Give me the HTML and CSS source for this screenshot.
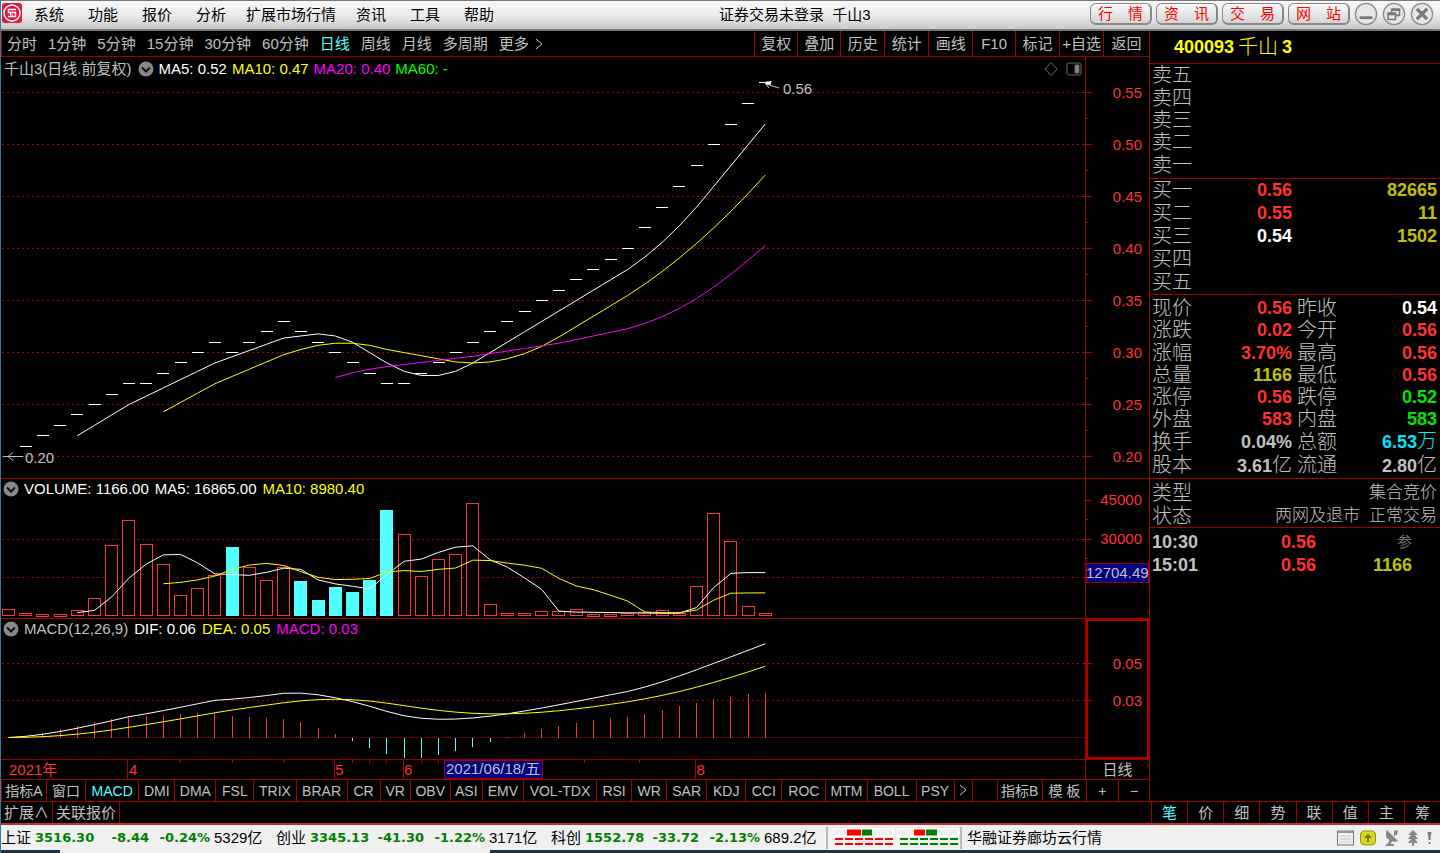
FILE: index.html
```html
<!DOCTYPE html>
<html lang="zh-CN">
<head>
<meta charset="utf-8">
<title>证券交易未登录 千山3</title>
<link rel="stylesheet" href="styles.css">
</head>
<body>
<div class="app">
  <header class="titlebar">
    <nav class="menu" aria-label="主菜单">
      <svg class="logo" viewBox="0 0 20 20" aria-hidden="true"><rect width="20" height="20" rx="3" fill="#e3173c"/><circle cx="10" cy="10" r="8" fill="none" stroke="#fff" stroke-width="1.5"/><path d="M14 6.500H6.500V9.500H13.500V13.500H6" fill="none" stroke="#fff" stroke-width="1.400"/><path d="M8.500 9.500V12H11" fill="none" stroke="#fff"/></svg>
      <button>系统</button><button>功能</button><button>报价</button><button>分析</button><button class="wide">扩展市场行情</button><button>资讯</button><button>工具</button><button>帮助</button>
    </nav>
    <div class="titlebar-right">
      <h1 class="window-title">证券交易未登录&nbsp; 千山3</h1>
      <div class="window-actions">
        <button class="pill">行　情</button><button class="pill">资　讯</button><button class="pill">交　易</button><button class="pill">网　站</button>
        <button class="round" aria-label="最小化"><svg viewBox="0 0 26 26"><circle cx="13" cy="13" r="11.500"/><path d="M6 17h14" stroke-width="3"/></svg></button>
        <button class="round" aria-label="还原"><svg viewBox="0 0 26 26"><circle cx="13" cy="13" r="11.500"/><path d="M6.500 12h8v7h-8zM6.500 13.500h8M10.500 12V7.500h8.500v7h-4.500M10.500 9h8.500" stroke-width="1.700"/></svg></button>
        <button class="round" aria-label="关闭"><svg viewBox="0 0 26 26"><circle cx="13" cy="13" r="11.500"/><path d="M7.500 7.500l11 11M18.500 7.500l-11 11" stroke-width="3.500"/></svg></button>
      </div>
    </div>
  </header>

  <div class="workspace">
    <main class="charts">
      <div class="toolbar">
        <div class="periods">
          <button>分时</button><button>1分钟</button><button>5分钟</button><button>15分钟</button><button>30分钟</button><button>60分钟</button><button class="active">日线</button><button>周线</button><button>月线</button><button>多周期</button><button class="more">更多<svg class="chevron" viewBox="0 0 8 12" aria-hidden="true"><path d="M1 1l6 5-6 5"/></svg></button>
        </div>
        <div class="tools">
          <button>复权</button><button>叠加</button><button>历史</button><button>统计</button><button>画线</button><button>F10</button><button>标记</button><button>+自选</button><button>返回</button>
        </div>
      </div>

      <section class="panel price">
        <div class="plot">
          <div class="legend">
            <span>千山3(日线.前复权)</span>
            <svg class="toggle" viewBox="0 0 16 16"><circle cx="8" cy="8" r="7.500"/><path d="M4 6.500l4 4 4-4"/></svg>
            <span class="white">MA5: 0.52</span><span class="yellow">MA10: 0.47</span><span class="magenta">MA20: 0.40</span><span class="green">MA60: -</span>
            <svg class="legend-icons" viewBox="0 0 42 16"><path d="M8 1.500l6 6.500-6 6.500L2 8z"/><rect x="24" y="2" width="14" height="12" rx="2"/><path d="M32 4h4v8h-4z" fill="#888"/></svg>
          </div>
          <svg class="canvas" id="price-plot" role="img" aria-label="日线"></svg>
        </div>
        <svg class="axis" id="price-axis"></svg>
      </section>

      <section class="panel volume">
        <div class="plot">
          <div class="legend">
            <svg class="toggle" viewBox="0 0 16 16"><circle cx="8" cy="8" r="7.500"/><path d="M4 6.500l4 4 4-4"/></svg>
            <span class="white">VOLUME: 1166.00</span><span class="white">MA5: 16865.00</span><span class="yellow">MA10: 8980.40</span>
          </div>
          <svg class="canvas" id="volume-plot" role="img" aria-label="VOLUME"></svg>
        </div>
        <svg class="axis" id="volume-axis"></svg>
      </section>

      <section class="panel macd">
        <div class="plot">
          <div class="legend">
            <svg class="toggle" viewBox="0 0 16 16"><circle cx="8" cy="8" r="7.500"/><path d="M4 6.500l4 4 4-4"/></svg>
            <span>MACD(12,26,9)</span><span class="white">DIF: 0.06</span><span class="yellow">DEA: 0.05</span><span class="magenta">MACD: 0.03</span>
          </div>
          <svg class="canvas" id="macd-plot" role="img" aria-label="MACD"></svg>
        </div>
        <svg class="axis boxed" id="macd-axis"></svg>
      </section>

      <div class="timeline">
        <svg class="dates" id="dates"></svg>
        <div class="timeline-period">日线</div>
      </div>

      <div class="indicators">
        <button>指标A</button><button>窗口</button><button class="active">MACD</button><button>DMI</button><button>DMA</button><button>FSL</button><button>TRIX</button><button>BRAR</button><button>CR</button><button>VR</button><button>OBV</button><button>ASI</button><button>EMV</button><button>VOL-TDX</button><button>RSI</button><button>WR</button><button>SAR</button><button>KDJ</button><button>CCI</button><button>ROC</button><button>MTM</button><button>BOLL</button><button>PSY</button><button aria-label="更多指标"><svg class="chevron" viewBox="0 0 8 12"><path d="M1 1l6 5-6 5"/></svg></button><span></span><button>指标B</button><button>模 板</button><button>+</button><button>−</button>
      </div>
    </main>

    <aside class="quote">
      <h2 class="stock"><b>400093</b><span>千山</span><b>3</b></h2>
      <table class="book sell">
        <tr><th>卖五</th><td></td><td></td></tr>
        <tr><th>卖四</th><td></td><td></td></tr>
        <tr><th>卖三</th><td></td><td></td></tr>
        <tr><th>卖二</th><td></td><td></td></tr>
        <tr><th>卖一</th><td></td><td></td></tr>
      </table>
      <table class="book buy">
        <tr><th>买一</th><td class="red">0.56</td><td class="gold">82665</td></tr>
        <tr><th>买二</th><td class="red">0.55</td><td class="gold">11</td></tr>
        <tr><th>买三</th><td class="white">0.54</td><td class="gold">1502</td></tr>
        <tr><th>买四</th><td></td><td></td></tr>
        <tr><th>买五</th><td></td><td></td></tr>
      </table>
      <table class="stats">
        <tr><th>现价</th><td class="red">0.56</td><th>昨收</th><td class="white">0.54</td></tr>
        <tr><th>涨跌</th><td class="red">0.02</td><th>今开</th><td class="red">0.56</td></tr>
        <tr><th>涨幅</th><td class="red">3.70%</td><th>最高</th><td class="red">0.56</td></tr>
        <tr><th>总量</th><td class="gold">1166</td><th>最低</th><td class="red">0.56</td></tr>
        <tr><th>涨停</th><td class="red">0.56</td><th>跌停</th><td class="lime">0.52</td></tr>
        <tr><th>外盘</th><td class="red">583</td><th>内盘</th><td class="lime">583</td></tr>
        <tr><th>换手</th><td>0.04%</td><th>总额</th><td class="aqua">6.53<span class="unit">万</span></td></tr>
        <tr><th>股本</th><td>3.61<span class="unit">亿</span></td><th>流通</th><td>2.80<span class="unit">亿</span></td></tr>
      </table>
      <table class="kind">
        <tr><th>类型</th><td><span>集合竞价</span></td></tr>
        <tr><th>状态</th><td><span>两网及退市</span><span>正常交易</span></td></tr>
      </table>
      <table class="ticks">
        <tr><td>10:30</td><td class="red">0.56</td><td class="ref">参</td></tr>
        <tr><td>15:01</td><td class="red">0.56</td><td class="gold">1166</td></tr>
      </table>
    </aside>
  </div>

  <div class="bottom-tabs">
    <div class="extend"><button>扩展∧</button><button>关联报价</button></div>
    <div class="side-tabs"><button class="active">笔</button><button>价</button><button>细</button><button>势</button><button>联</button><button>值</button><button>主</button><button>筹</button></div>
  </div>

  <footer class="status">
    <div class="index"><span>上证</span><b>3516.30</b><b class="num">-8.44</b><b class="num">-0.24%</b><span class="amount">5329亿</span></div>
    <div class="index"><span>创业</span><b>3345.13</b><b class="num">-41.30</b><b class="num">-1.22%</b><span class="amount">3171亿</span></div>
    <div class="index"><span>科创</span><b>1552.78</b><b class="num">-33.72</b><b class="num">-2.13%</b><span class="amount">689.2亿</span></div>
    <svg class="meters" viewBox="0 0 132 22" aria-hidden="true">
      <path d="M4 5.500h62M69 5.500h62" stroke="#fff" stroke-width="9"/>
      <path d="M5 5.500h59M70 5.500h59" stroke="#eee" stroke-width="5"/>
      <path d="M19 5.500h14M86 5.500h11" stroke="#f00" stroke-width="6"/>
      <path d="M34 5.500h10M98 5.500h11" stroke="#008000" stroke-width="6"/>
      <path d="M7 12h58M7 17h58" stroke="#f00" stroke-width="2" stroke-dasharray="8 2"/>
      <path d="M72 12h58M72 17h58" stroke="#008000" stroke-width="2" stroke-dasharray="8 2"/>
    </svg>
    <span class="server">华融证券廊坊云行情</span>
    <svg class="tray" viewBox="0 0 100 20" aria-hidden="true">
      <rect x="1.500" y="3" width="16" height="14" fill="#eee" stroke="#777"/><path d="M2 4h15" stroke="#999" stroke-width="2"/><path d="M4 8h11M4 11h11M4 14h11" stroke="#ccc"/>
      <rect x="24.500" y="3" width="15" height="14" rx="4" fill="#d8d820" stroke="#8f8f10"/><path d="M32 6l-4 4h3v4h2v-4h3z" fill="#77770a"/>
      <path d="M50 4l1-2 11 11-3 1q-6-1-9-5zM58 3l4-1-1 5-3 1zM53 10l3 3-1 3h3v2h-9l4-4z" fill="#888"/>
      <path d="M77 2l5 5h-3l3 4h-3l3 4h-4v3h-2v-3h-4l3-4h-3l3-4h-3z" fill="#888"/>
      <path d="M91.500 4h4l-1 5h-2z" fill="#777"/><path d="M93.500 9v3M93.500 14v2" stroke="#777" stroke-width="2"/>
    </svg>
  </footer>
  <div class="taskbar"></div>
</div>
<script src="script.js"></script>
</body>
</html>
```
FILE: styles.css
```css
* { box-sizing: border-box; }

body {
  margin: 0;
  background: #000;
  color: #c0c0c0;
  font: 15px/20px "Liberation Sans", "Noto Sans CJK SC", sans-serif;
}

button {
  margin: 0;
  padding: 0;
  border: 0;
  background: none;
  color: inherit;
  font: inherit;
  white-space: nowrap;
}

.app {
  min-height: 100vh;
  display: flex;
  flex-direction: column;
  border-left: 1px solid #2d7d9f;
}

.white { color: #fff; }
.yellow { color: #ff0; }
.magenta { color: #f0f; }
.green { color: #0f0; }
.red { color: #ff3232; }
.gold { color: #c0c000; }
.lime { color: #00e600; }
.aqua { color: #00e6ff; }
.active { color: #54ffff; }

/* title bar */
.titlebar {
  display: grid;
  grid-template-columns: 718fr 721fr;
  height: 31px;
  border-top: 1px solid #777;
  border-bottom: 2px solid #777;
  background: linear-gradient(#f8f8f8, #ececec 50%, #c8c8c8);
  color: #000;
}
.menu, .titlebar-right, .window-actions { display: flex; align-items: center; }
.logo { width: 20px; height: 20px; margin: 0 0 4px 1px; }
.menu button { padding: 0 12px; }
.menu .wide { padding: 0 8px; }
.titlebar-right { justify-content: space-between; }
.window-title { margin: 0; font-size: 15px; font-weight: 400; white-space: nowrap; }
.window-actions { gap: 4px; padding: 0 6px 2px 0; }
.pill {
  width: 62px;
  height: 22px;
  border: 1px solid #888;
  border-width: 1px 2px 2px 1px;
  border-radius: 6px;
  background: linear-gradient(#fafafa, #d4d4d4);
  color: #f00;
  line-height: 18px;
}
.round { width: 24px; height: 24px; }
.round svg { display: block; fill: none; stroke: #777; stroke-width: 1.5; }
.round circle { fill: #e6e6e6; stroke: #8c8c8c; }

/* workspace */
.workspace { flex: 1; display: grid; grid-template-columns: 1148fr 291fr; }
.charts { display: flex; flex-direction: column; min-width: 0; }

.toolbar {
  display: grid;
  grid-template-columns: 753fr 395fr;
  height: 26px;
  border-left: 1px solid #a00000;
  border-bottom: 1px solid #a00000;
}
.periods { display: flex; align-items: center; gap: 11px; padding-left: 5px; }
.more { display: flex; align-items: center; gap: 6px; }
.chevron { width: 8px; height: 12px; fill: none; stroke: #c0c0c0; }
.tools { display: grid; grid-template-columns: 43fr 43fr 44fr 44fr 44fr 43fr 44fr 44fr 46fr; }
.tools button { border-left: 1px solid #a00000; }

.panel { display: grid; grid-template-columns: minmax(0, 1085fr) 63px; border-bottom: 1px solid #a00000; }
.plot { display: flex; flex-direction: column; min-width: 0; border-right: 1px solid #a00000; }
.legend { display: flex; align-items: center; gap: 6px; height: 24px; padding-left: 3px; white-space: nowrap; }
.price .legend { gap: 5px; }
.volume .legend, .macd .legend { height: 20px; padding-left: 2px; }
.toggle { width: 16px; height: 16px; margin-left: 1px; flex: none; }
.volume .toggle, .macd .toggle { margin: 0 -1px 0 0; }
.toggle circle { fill: #888; }
.toggle path { fill: none; stroke: #111; stroke-width: 2; }
.legend-icons { width: 42px; height: 16px; margin-left: auto; fill: none; stroke: #666; }
.canvas { display: block; width: 100%; }
.price .canvas { height: 397px; }
.volume .canvas { height: 119px; }
.macd .canvas { height: 120px; }
.axis { display: block; width: 100%; height: 0; min-height: 100%; overflow: visible; }
.boxed { outline: 2px solid #b00000; outline-offset: -2px; }

.canvas text, .axis text, .dates text { font-size: 15px; }
.axis text { fill: #ff3232; text-anchor: end; }
.grid { stroke: #a00000; stroke-dasharray: 2 3; shape-rendering: crispEdges; }
.grid.zero { stroke-dasharray: 1 1; }
.tick { stroke: #b00000; shape-rendering: crispEdges; }
.line { fill: none; stroke-width: 1; }
.bar { shape-rendering: crispEdges; }
.axis .marker { fill: #c0c0c0; text-anchor: start; }

.timeline { display: grid; grid-template-columns: minmax(0, 1085fr) 63px; height: 19px; }
.dates { display: block; width: 100%; height: 19px; border-right: 1px solid #a00000; }
.timeline-period { text-align: center; }

.indicators {
  display: grid;
  grid-template-columns: 45fr 39fr 53fr 36fr 41fr 38fr 42fr 51fr 33fr 30fr 40fr 32fr 41fr 73fr 35fr 35fr 40fr 39fr 36fr 44fr 41fr 49fr 38fr 18fr 25fr 45fr 44fr 32fr 31fr;
  height: 22px;
  border-top: 1px solid #a00000;
  font-size: 14px;
}
.indicators > * { min-width: 0; border-left: 1px solid #a00000; overflow: hidden; }

/* quote side */
.quote { border-left: 1px solid #a00000; }
.stock {
  display: flex;
  align-items: center;
  gap: 4px;
  height: 33px;
  margin: 0;
  padding-left: 24px;
  border-bottom: 1px solid #a00000;
  color: #ff0;
  font-size: 18px;
  font-weight: 400;
}
.stock span { font-size: 20px; font-weight: 300; }
.quote table { width: 100%; border-collapse: separate; border-spacing: 0; table-layout: fixed; border-bottom: 1px solid #a00000; }
.quote th, .quote td { padding: 0 3px 0 2px; line-height: 20px; white-space: nowrap; }
.quote th { text-align: left; font-size: 20px; font-weight: 300; }
.quote td { text-align: right; font-size: 18px; font-weight: 700; }
.quote .sell { height: 115px; padding-bottom: 2px; }
.quote .buy { height: 116px; padding-bottom: 1px; }
.quote .stats { height: 184px; padding: 2px 0 1px; }
.quote .kind { height: 49px; padding-top: 2px; }
.quote .ticks { height: 48px; padding-top: 2px; border-bottom: 0; }
.book th { width: 50px; }
.book td:nth-child(2) { width: 95px; }
.stats th { width: 44px; }
.unit { font-size: 20px; font-weight: 300; }
.kind th { width: 44px; }
.quote .kind td { font-size: 17px; font-weight: 300; }
.kind span + span { margin-left: 9px; }
.quote .ticks td:first-child { width: 60px; text-align: left; }
.ticks td:nth-child(2) { width: 109px; }
.quote .ticks td:last-child { padding-right: 28px; }
.quote .ticks .ref { color: #707070; font-size: 15px; font-weight: 400; }

/* bottom tabs */
.bottom-tabs { display: grid; grid-template-columns: 1150fr 289fr; height: 24px; border-top: 1px solid #a00000; border-bottom: 2px solid #c03030; }
.extend button { height: 21px; padding: 0 3px; border-right: 1px solid #a00000; }
.side-tabs { display: grid; grid-template-columns: repeat(8, 1fr); }
.side-tabs button { border-left: 1px solid #a00000; }

/* status bar */
.status { display: flex; align-items: center; height: 25px; background: #f0f0f0; color: #000; white-space: nowrap; }
.index { display: grid; grid-template-columns: 34px 60px 54px 61px 66px; }
.index b { color: #008000; font: bold 13px/20px "DejaVu Sans", sans-serif; }
.index .num { text-align: right; }
.index .amount { padding-left: 4px; font-size: 15px; }
.meters { width: 136px; height: 22px; border: solid #bbb; border-width: 0 2px; }
.server { padding-left: 5px; }
.tray { width: 100px; height: 20px; margin-left: auto; margin-right: 4px; }
.taskbar { height: 3px; background: linear-gradient(90deg, #1f3440 59px, #f4f4f4 59px, #f4f4f4 489px, #1f3440 489px); }
```
FILE: script.js
```js
const NS = 'http://www.w3.org/2000/svg';
const x = k => 7.5 + 17.2 * k;

function add(id, tag, attrs, text) {
  const el = document.createElementNS(NS, tag);
  for (const key in attrs) el.setAttribute(key, attrs[key]);
  if (text !== undefined) el.textContent = text;
  document.getElementById(id).appendChild(el);
}

function average(values, n) {
  return values.map((_, i) => i < n - 1 ? null
    : values.slice(i - n + 1, i + 1).reduce((a, b) => a + b, 0) / n);
}

function ema(values, n) {
  const out = [values[0]];
  for (let i = 1; i < values.length; i++) out.push((2 * values[i] + (n - 1) * out[i - 1]) / (n + 1));
  return out;
}

function line(id, values, y, color) {
  const points = values.map((v, k) => v === null ? '' : `${x(k)},${y(v)}`).join(' ').trim();
  add(id, 'polyline', { class: 'line', points, stroke: color });
}

function gridLine(id, y, cls = 'grid') {
  add(id, 'line', { class: cls, x1: 1, x2: '100%', y1: y, y2: y });
}

function tick(id, y, major) {
  add(id, 'line', { class: 'tick', x1: major ? -3 : 0, x2: major ? 6 : 2, y1: y, y2: y });
}

/* price */
const close = [20, 21, 22, 23, 24, 25, 26, 27, 27, 28, 29, 30, 31, 30, 31, 32, 33, 32, 31, 30, 29, 28, 27, 27, 28,
  29, 30, 31, 32, 33, 34, 35, 36, 37, 38, 39, 40, 42, 44, 46, 48, 50, 52, 54, 56].map(v => v / 100);
const priceY = v => 375.5 - (v - 0.2) * 1039;
for (let i = 0; i < 8; i++) {
  const v = 0.2 + i * 0.05;
  gridLine('price-plot', priceY(v));
  tick('price-axis', priceY(v) + 24, true);
  if (i < 7) tick('price-axis', priceY(v + 0.025) + 24, false);
  add('price-axis', 'text', { x: 56, y: priceY(v) + 29 }, v.toFixed(2));
}
close.forEach((v, k) => {
  add('price-plot', 'line', { class: 'bar', x1: x(k) - 6, x2: x(k) + 6, y1: priceY(v), y2: priceY(v), stroke: '#fff' });
});
line('price-plot', average(close, 5), priceY, '#fff');
line('price-plot', average(close, 10), priceY, '#ff0');
line('price-plot', average(close, 20), priceY, '#f0f');
add('price-plot', 'path', { d: 'M2 375.5H22M12 371.5L7 375.500L12 379.500M778 7L765 3M771 0.500L764 2L768 7', fill: 'none', stroke: '#c0c0c0' });
add('price-plot', 'rect', { x: 765, y: 0.5, width: 5, height: 3, fill: '#fff' });
add('price-plot', 'text', { x: 24, y: 382, fill: '#c0c0c0' }, '0.20');
add('price-plot', 'text', { x: 782, y: 13, fill: '#c0c0c0' }, '0.56');

/* volume, in pixels of bar height */
const volume = [6.5, 2.5, 1.5, 1.5, 5, 17.5, 70, 95, 71.5, 51.5, 20, 27.5, 40, 68, 48, 35, 48, 34, 15.5, 28, 23, 35.5,
  105.5, 81.5, 39, 56.5, 61.5, 112.5, 11.5, 2.5, 2.5, 4, 4, 6.5, 1.5, 1.5, 2.5, 3, 5, 2.5, 29, 102.5, 74, 9, 2.5];
const falling = [13, 17, 18, 19, 20, 21, 22];
const volumeY = v => 117 - v;
gridLine('volume-plot', 40);
gridLine('volume-plot', 78.5);
volume.forEach((v, k) => {
  const down = falling.includes(k);
  const top = Math.round(volumeY(v)) - 0.5;
  add('volume-plot', 'rect', {
    class: 'bar', x: Math.round(x(k) - 6.5) + 0.5, y: top, width: 12,
    height: Math.max(2, 116.5 - top), fill: down ? '#54ffff' : '#000', stroke: down ? '#54ffff' : '#ff3232'
  });
});
line('volume-plot', average(volume, 5), volumeY, '#fff');
line('volume-plot', average(volume, 10), volumeY, '#ff0');
[21.5, 40.5, 60.5, 79.5, 98.5].forEach((y, i) => tick('volume-axis', y, i % 2 === 0));
add('volume-axis', 'text', { x: 56, y: 26 }, '45000');
add('volume-axis', 'text', { x: 56, y: 65 }, '30000');
add('volume-axis', 'rect', { x: 0.5, y: 84.5, width: 62, height: 19, fill: '#000080', stroke: '#a00000' });
add('volume-axis', 'text', { class: 'marker', x: 0, y: 99 }, '12704.49');

/* macd */
const fast = ema(close, 12), slow = ema(close, 26);
const dif = fast.map((v, i) => v - slow[i]);
const dea = ema(dif, 9);
const macdY = v => 98.5 - v * 1470;
gridLine('macd-plot', 24.5);
gridLine('macd-plot', 61.5);
gridLine('macd-plot', 98.5, 'grid zero');
dif.forEach((v, k) => {
  const m = 2 * (v - dea[k]);
  add('macd-plot', 'line', { class: 'bar', x1: x(k), x2: x(k), y1: 98.5, y2: macdY(m), stroke: m < 0 ? '#54ffff' : '#ff3232' });
});
line('macd-plot', dif, macdY, '#fff');
line('macd-plot', dea, macdY, '#ff0');
[44.5, 81.5].forEach(y => tick('macd-axis', y, true));
add('macd-axis', 'text', { x: 56, y: 50 }, '0.05');
add('macd-axis', 'text', { x: 56, y: 87 }, '0.03');

/* dates */
[[7, '4'], [19, '5'], [23, '6'], [40, '8']].forEach(([k, label]) => {
  add('dates', 'line', { class: 'tick', x1: x(k) - 1, x2: x(k) - 1, y1: 0, y2: 20 });
  add('dates', 'text', { x: x(k), y: 15, fill: '#ff3232' }, label);
});
[10, 13, 16, 20, 21, 22, 24, 25, 33.5, 36.7].forEach(k => {
  add('dates', 'line', { class: 'tick', x1: x(k), x2: x(k), y1: 0, y2: 3 });
});
add('dates', 'text', { x: 8, y: 15, fill: '#ff3232' }, '2021年');
add('dates', 'rect', { x: 443.5, y: 0.5, width: 98, height: 18, fill: '#000080', stroke: '#a00000' });
add('dates', 'text', { x: 445, y: 14, fill: '#c0c0c0' }, '2021/06/18/五');
```
